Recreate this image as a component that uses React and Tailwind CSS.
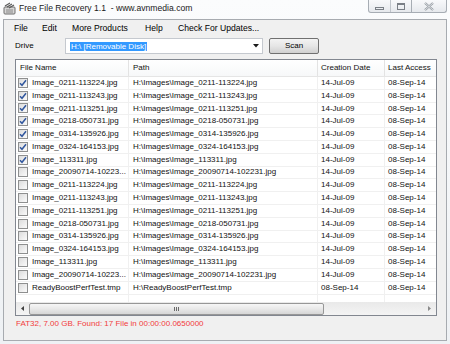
import React from "react";

const checkedNames = [
  "Image_0211-113224.jpg",
  "Image_0211-113243.jpg",
  "Image_0211-113251.jpg",
  "Image_0218-050731.jpg",
  "Image_0314-135926.jpg",
  "Image_0324-164153.jpg",
  "Image_113311.jpg",
];

const files = [
  ...checkedNames.map((n) => ({ name: n, path: `H:\\Images\\${n}`, checked: true })),
  { name: "Image_20090714-10223...", path: "H:\\Images\\Image_20090714-102231.jpg" },
  ...checkedNames.map((n) => ({ name: n, path: `H:\\Images\\${n}` })),
  { name: "Image_20090714-10223...", path: "H:\\Images\\Image_20090714-102231.jpg" },
  { name: "ReadyBoostPerfTest.tmp", path: "H:\\ReadyBoostPerfTest.tmp", created: "08-Sep-14" },
];

// fixed slot widths so the menu items land where the original ones do
const menu = [
  { label: "File", w: "w-[28px]" },
  { label: "Edit", w: "w-[30px]" },
  { label: "More Products", w: "w-[73px]" },
  { label: "Help", w: "w-[33px]" },
  { label: "Check For Updates...", w: "" },
];

const CheckBox = ({ checked }) => (
  <span className="w-[10px] h-[10px] border border-[#8e8f8f] bg-gradient-to-br from-[#dcdcdc] to-[#fbfbfb] flex items-center justify-center shrink-0">
    {checked && (
      <svg width="8" height="8" viewBox="0 0 8 8">
        <path d="M1 4.2 L3 6.3 L7 1.2" fill="none" stroke="#31579e" strokeWidth="1.5" />
      </svg>
    )}
  </span>
);

const AppIcon = () => (
  <svg width="13" height="13" viewBox="0 0 13 13">
    <rect x="1" y="5" width="11" height="7" rx="1" fill="#d6d6d6" stroke="#6f6f6f" />
    <path d="M2 4 L7 1 M4 5 L9 2 M6 6 L11 3" stroke="#5a5a5a" strokeWidth="1.2" />
    <path d="M3 8 H10 M3 10 H10" stroke="#8a8a8a" />
  </svg>
);

export default function App() {
  return (
    <div className="w-[450px] h-[344px] bg-gradient-to-b from-[#fbfcfd] to-[#eef1f4] font-['Liberation_Sans',Arial,sans-serif] text-black overflow-hidden flex flex-col">
      {/* title bar */}
      <div className="h-[19px] flex items-start shrink-0">
        <div className="pl-[3px] pt-[2px]">
          <AppIcon />
        </div>
        <span className="ml-[3px] mt-[3px] text-[8.6px] leading-[11px] whitespace-pre text-[#1a1a1a]">
          Free File Recovery 1.1  - www.avnmedia.com
        </span>
        <div className="ml-auto mr-[3px] flex h-[13px]">
          <div className="flex border border-t-0 border-[#a7adb4] rounded-bl-[3px] bg-gradient-to-b from-[#f8f9fb] to-[#e6e9ed]">
            <div className="w-[22px] flex items-center justify-center border-r border-[#c0c5cb]">
              <span className="w-[9px] h-[3px] border border-[#7a7f86] mt-[4px]" />
            </div>
            <div className="w-[20px] flex items-center justify-center">
              <span className="w-[8px] h-[7px] border border-t-2 border-[#7a7f86]" />
            </div>
          </div>
          <div className="w-[35px] flex items-center justify-center border border-l-0 border-t-0 border-[#a7adb4] rounded-br-[3px] bg-gradient-to-b from-[#f8f9fb] to-[#e6e9ed]">
            <svg width="10" height="9" viewBox="0 0 10 9">
              <path d="M1 1 L9 8 M9 1 L1 8" stroke="#949aa1" strokeWidth="2.2" />
              <path d="M1 1 L9 8 M9 1 L1 8" stroke="#eef0f3" strokeWidth="0.8" />
            </svg>
          </div>
        </div>
      </div>

      {/* client area */}
      <div className="mx-[3px] h-[322px] border border-[#a7abb0] bg-[#f0f0f0] flex flex-col">
        <div className="h-[17px] flex items-center pl-[10px] text-[8.6px] shrink-0">
          {menu.map((m) => (
            <span key={m.label} className={m.w}>
              {m.label}
            </span>
          ))}
        </div>

        <div className="h-[18px] flex items-center text-[8px] shrink-0">
          <span className="w-[61px] pl-[11px]">Drive</span>
          <div className="w-[198px] h-[16px] bg-white border border-[#c5c9cf] flex items-center pl-[4px] pr-[3px]">
            <span className="bg-[#3399ff] text-white px-[1px] leading-[9px]">H:\ [Removable Disk]</span>
            <svg className="ml-auto" width="6" height="4" viewBox="0 0 6 4">
              <path d="M0 0 H6 L3 3.5 Z" fill="#1a1a1a" />
            </svg>
          </div>
          <button className="ml-[6px] w-[50px] h-[16px] border border-[#707070] rounded-[2px] bg-gradient-to-b from-[#f3f3f3] via-[#e6e6e6] to-[#d0d0d0] text-[8px]">
            Scan
          </button>
        </div>

        {/* list view */}
        <div className="mt-[4px] ml-[11px] w-[422px] h-[257px] border border-[#828790] bg-white flex flex-col shrink-0 text-[8px] text-[#111]">
          <div className="h-[17px] flex shrink-0 border-b border-[#e5e5e5] bg-gradient-to-b from-white to-[#f7f8f9]">
            <div className="w-[113px] pl-[4px] flex items-center border-r border-[#e3e3e3]">File Name</div>
            <div className="w-[189px] pl-[4px] flex items-center border-r border-[#e3e3e3]">Path</div>
            <div className="w-[67px] pl-[3px] flex items-center border-r border-[#e3e3e3]">Creation Date</div>
            <div className="w-[51px] pl-[3px] flex items-center">Last Access</div>
          </div>
          <div className="flex-1 flex flex-col overflow-hidden">
            {files.map((f, i) => (
              <div key={i} className="h-[12.8px] flex shrink-0 border-b border-[#f0f0f0] leading-[12px]">
                <div className="w-[113px] pl-[2px] flex items-center gap-[4px] border-r border-[#f0f0f0] whitespace-nowrap overflow-hidden">
                  <CheckBox checked={f.checked} />
                  <span>{f.name}</span>
                </div>
                <div className="w-[189px] pl-[4px] flex items-center border-r border-[#f0f0f0] whitespace-nowrap overflow-hidden">
                  {f.path}
                </div>
                <div className="w-[67px] pl-[3px] flex items-center border-r border-[#f0f0f0]">
                  {f.created || "14-Jul-09"}
                </div>
                <div className="w-[51px] pl-[3px] flex items-center">08-Sep-14</div>
              </div>
            ))}
            <div className="flex-1 flex">
              <div className="w-[113px] border-r border-[#f0f0f0]" />
              <div className="w-[189px] border-r border-[#f0f0f0]" />
              <div className="w-[67px] border-r border-[#f0f0f0]" />
            </div>
          </div>
          {/* horizontal scrollbar */}
          <div className="h-[13px] flex items-center shrink-0 bg-gradient-to-b from-[#e9e9e9] to-[#f4f4f4]">
            <div className="w-[13px] h-full flex items-center justify-center">
              <svg width="3" height="5" viewBox="0 0 3 5">
                <path d="M3 0 V5 L0 2.5 Z" fill="#404040" />
              </svg>
            </div>
            <div className="w-[295px] h-[12px] border border-[#979797] rounded-[2px] bg-gradient-to-b from-[#f6f6f6] via-[#e8e8e8] to-[#d6d6d6] flex items-center justify-center gap-[1px]">
              <span className="w-[1px] h-[4px] bg-[#6a6a6a]" />
              <span className="w-[1px] h-[4px] bg-[#6a6a6a]" />
              <span className="w-[1px] h-[4px] bg-[#6a6a6a]" />
            </div>
            <div className="ml-auto w-[13px] h-full flex items-center justify-center">
              <svg width="3" height="5" viewBox="0 0 3 5">
                <path d="M0 0 V5 L3 2.5 Z" fill="#8a8a8a" />
              </svg>
            </div>
          </div>
        </div>

        <div className="h-[15px] flex items-center pl-[12px] text-[8px] text-[#f23c3c] shrink-0">
          FAT32, 7.00 GB. Found: 17 File in 00:00:00.0650000
        </div>
      </div>
    </div>
  );
}
